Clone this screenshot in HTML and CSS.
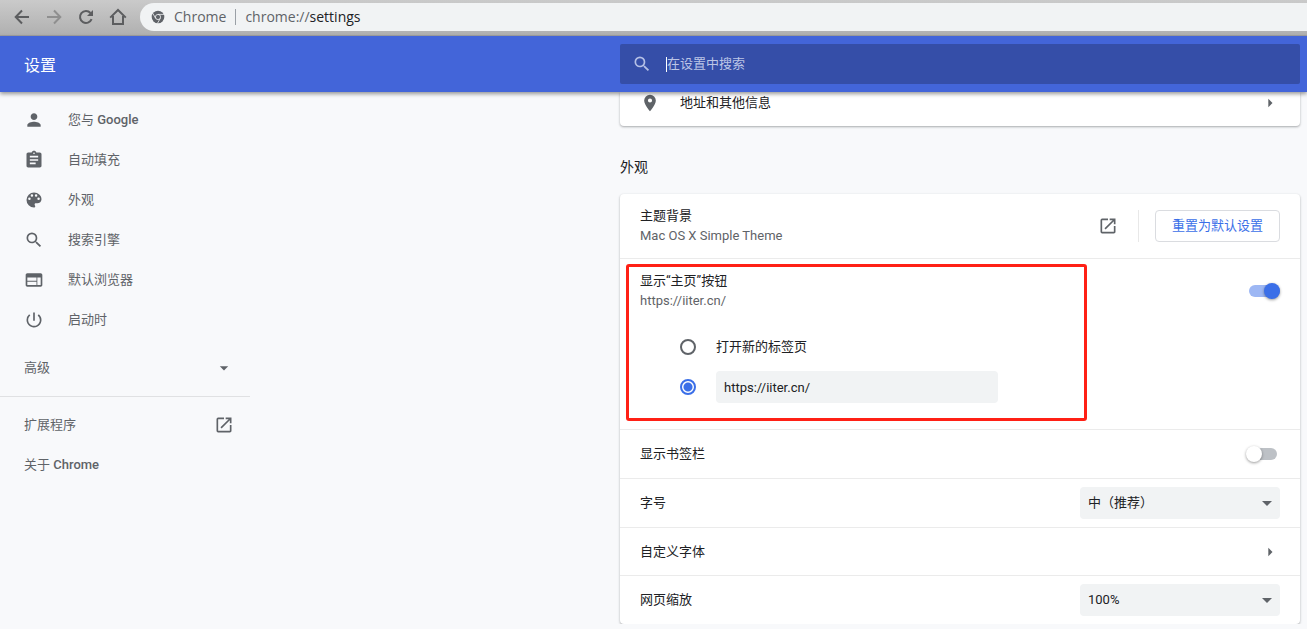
FILE: index.html
```html
<!DOCTYPE html>
<html lang="zh-CN">
<head>
<meta charset="utf-8">
<title>设置</title>
<link rel="stylesheet" href="styles.css">
</head>
<body>
<div class="toolbar">
  <div class="nav-buttons">
    <button class="nav-button" aria-label="后退"><svg viewBox="0 0 20 20"><path d="M17 10H4M10 3.5 3.7 10l6.3 6.5"/></svg></button>
    <button class="nav-button nav-button-off" aria-label="前进"><svg viewBox="0 0 20 20"><path d="M3 10h13M10 3.5l6.3 6.5-6.3 6.5"/></svg></button>
    <button class="nav-button" aria-label="重新加载"><svg viewBox="0 0 20 20"><path d="M15.6 12.2A6 6 0 1 1 14.5 6"/><path class="solid" d="M17 3v6h-6z"/></svg></button>
    <button class="nav-button" aria-label="主页"><svg viewBox="0 0 20 20"><path d="M2.2 10.6 10 3l7.800 7.600M5 9v8h10V9"/></svg></button>
  </div>
  <div class="address">
    <svg class="chrome-icon" viewBox="0 0 14 14"><circle cx="7" cy="7" r="6.300" fill="#5f6368"/><g fill="none" stroke="#f1f3f4" stroke-width=".8"><circle cx="7" cy="7" r="2.600"/><path d="M7 4.400h6M4.700 8.400 1.700 3.200M9.300 8.400l-3 5.200"/></g></svg>
    <span class="site">Chrome</span>
    <span class="url">chrome://<span class="url-host">settings</span></span>
  </div>
</div>

<header class="header">
  <h1 class="title">设置</h1>
  <label class="search">
    <svg class="icon" viewBox="0 0 24 24"><path d="M15.500 14h-.79l-.28-.27A6.470 6.470 0 0 0 16 9.500 6.500 6.500 0 1 0 9.500 16c1.610 0 3.090-.59 4.230-1.570l.27.28v.79l5 4.990L20.490 19l-4.990-5zm-6 0C7.010 14 5 11.990 5 9.500S7.010 5 9.500 5 14 7.010 14 9.500 11.990 14 9.500 14z"/></svg>
    <span class="caret"></span>
    <input class="search-input" type="text" placeholder="在设置中搜索" aria-label="在设置中搜索">
  </label>
</header>

<div class="page">
  <nav class="sidebar">
    <a class="menu-item" href="#people"><svg class="icon" viewBox="0 0 24 24"><path d="M12 12c2.210 0 4-1.790 4-4s-1.790-4-4-4-4 1.790-4 4 1.790 4 4 4zm0 2c-2.670 0-8 1.340-8 4v2h16v-2c0-2.660-5.330-4-8-4z"/></svg><span>您与 <span class="latin">Google</span></span></a>
    <a class="menu-item" href="#autofill"><svg class="icon" viewBox="0 0 24 24"><path d="M19 3h-4.180C14.400 1.840 13.300 1 12 1s-2.400.84-2.820 2H5c-1.100 0-2 .9-2 2v14c0 1.100.9 2 2 2h14c1.100 0 2-.9 2-2V5c0-1.100-.9-2-2-2zm-7 0c.55 0 1 .45 1 1s-.45 1-1 1-1-.45-1-1 .45-1 1-1zm2 14H7v-2h7v2zm3-4H7v-2h10v2zm0-4H7V7h10v2z"/></svg>自动填充</a>
    <a class="menu-item" href="#appearance"><svg class="icon" viewBox="0 0 24 24"><path d="M12 3a9 9 0 0 0 0 18c.83 0 1.500-.67 1.500-1.500 0-.39-.15-.74-.39-1.010-.23-.26-.38-.61-.38-.99 0-.83.67-1.500 1.500-1.500H16c2.760 0 5-2.240 5-5 0-4.420-4.030-8-9-8zm-5.500 9a1.500 1.500 0 1 1 0-3 1.500 1.500 0 0 1 0 3zm3-4a1.500 1.500 0 1 1 0-3 1.500 1.500 0 0 1 0 3zm5 0a1.500 1.500 0 1 1 0-3 1.500 1.500 0 0 1 0 3zm3 4a1.500 1.500 0 1 1 0-3 1.500 1.500 0 0 1 0 3z"/></svg>外观</a>
    <a class="menu-item" href="#search"><svg class="icon" viewBox="0 0 24 24"><path d="M15.500 14h-.79l-.28-.27A6.470 6.470 0 0 0 16 9.500 6.500 6.500 0 1 0 9.500 16c1.610 0 3.090-.59 4.230-1.570l.27.28v.79l5 4.990L20.490 19l-4.990-5zm-6 0C7.010 14 5 11.990 5 9.500S7.010 5 9.500 5 14 7.010 14 9.500 11.990 14 9.500 14z"/></svg>搜索引擎</a>
    <a class="menu-item" href="#default"><svg class="icon" viewBox="0 0 24 24"><path d="M20 4H4c-1.100 0-1.990.9-1.990 2L2 18c0 1.100.9 2 2 2h16c1.100 0 2-.9 2-2V6c0-1.100-.9-2-2-2zm-5 14H4v-4h11v4zm0-5H4V9h11v4zm5 5h-4V9h4v9z"/></svg>默认浏览器</a>
    <a class="menu-item" href="#startup"><svg class="icon" viewBox="0 0 24 24"><path d="M13 3h-2v10h2V3zm4.830 2.170-1.420 1.420A6.920 6.920 0 0 1 19 12a7 7 0 1 1-11.420-5.420L6.170 5.170A8.930 8.930 0 0 0 3 12a9 9 0 1 0 14.830-6.830z"/></svg>启动时</a>
    <button class="menu-item menu-advanced" type="button">高级<svg class="icon" viewBox="0 0 24 24"><path d="m7 10 5 5 5-5z"/></svg></button>
    <div class="menu-extra">
      <a class="menu-item menu-spread" href="#extensions">扩展程序<svg class="icon" viewBox="0 0 24 24"><path d="M19 19H5V5h7V3H5a2 2 0 0 0-2 2v14a2 2 0 0 0 2 2h14c1.100 0 2-.9 2-2v-7h-2v7zM14 3v2h3.590l-9.830 9.830 1.410 1.410L19 6.410V10h2V3h-7z"/></svg></a>
      <a class="menu-item menu-spread" href="#about"><span>关于 <span class="latin">Chrome</span></span></a>
    </div>
  </nav>

  <main class="main">
    <section class="card card-scrolled">
      <a class="address-row" href="#addresses">
        <svg class="icon" viewBox="0 0 24 24"><path d="M12 2a7 7 0 0 0-7 7c0 5.250 7 13 7 13s7-7.750 7-13a7 7 0 0 0-7-7zm0 9.500a2.500 2.500 0 1 1 0-5 2.500 2.500 0 0 1 0 5z"/></svg>
        <span class="grow">地址和其他信息</span>
        <svg class="icon" viewBox="0 0 24 24"><path d="m10 17 5-5-5-5z"/></svg>
      </a>
    </section>

    <h2 class="section-title">外观</h2>
    <section class="card">
      <div class="row row-tall">
        <div class="grow">
          <div>主题背景</div>
          <div class="secondary">Mac OS X Simple Theme</div>
        </div>
        <a class="theme-link" href="#theme" aria-label="打开主题背景"><svg class="icon" viewBox="0 0 24 24"><path d="M19 19H5V5h7V3H5a2 2 0 0 0-2 2v14a2 2 0 0 0 2 2h14c1.100 0 2-.9 2-2v-7h-2v7zM14 3v2h3.590l-9.830 9.830 1.410 1.410L19 6.410V10h2V3h-7z"/></svg></a>
        <div class="divider"></div>
        <button class="reset" type="button">重置为默认设置</button>
      </div>

      <div class="home">
        <div class="row home-row">
          <label class="grow" for="home-toggle">
            <span class="line">显示“主页”按钮</span>
            <span class="line secondary">https://iiter.cn/</span>
          </label>
          <input class="toggle" id="home-toggle" type="checkbox" checked>
        </div>
        <div class="options">
          <label class="option"><input class="radio" type="radio" name="home">打开新的标签页</label>
          <div class="option">
            <input class="radio" type="radio" name="home" aria-label="自定义网址" checked>
            <input class="url-input" type="text" value="https://iiter.cn/" aria-label="主页网址">
          </div>
        </div>
        <div class="highlight"></div>
      </div>

      <div class="row">
        <label class="grow" for="bookmarks">显示书签栏</label>
        <input class="toggle" id="bookmarks" type="checkbox">
      </div>
      <div class="row">
        <label class="grow" for="font-size">字号</label>
        <div class="select-box">
          <select class="select" id="font-size"><option>中（推荐）</option></select>
          <svg class="select-arrow" viewBox="0 0 10 5"><path d="M0 0h10L5 5z"/></svg>
        </div>
      </div>
      <a class="row row-short" href="#fonts">
        <span class="grow">自定义字体</span>
        <svg class="icon" viewBox="0 0 24 24"><path d="m10 17 5-5-5-5z"/></svg>
      </a>
      <div class="row row-short row-plain">
        <label class="grow" for="zoom">网页缩放</label>
        <div class="select-box">
          <select class="select" id="zoom"><option>100%</option></select>
          <svg class="select-arrow" viewBox="0 0 10 5"><path d="M0 0h10L5 5z"/></svg>
        </div>
      </div>
    </section>
  </main>
</div>
</body>
</html>
```

FILE: styles.css
```css
* {
  box-sizing: border-box;
}

body {
  margin: 0;
  background: #f8f9fb;
  color: #202124;
  font: 13px/20px Roboto, "Noto Sans CJK SC", sans-serif;
}

a {
  color: inherit;
  text-decoration: none;
}

button,
input,
select {
  margin: 0;
  border: 0;
  font: inherit;
  color: inherit;
}

svg {
  display: block;
}

.icon {
  flex: none;
  width: 20px;
  height: 20px;
  fill: #5f6368;
}

.grow {
  flex: 1;
}

/* Browser toolbar */
.toolbar {
  display: flex;
  align-items: center;
  gap: 12px;
  height: 36px;
  padding: 0 0 2px 12px;
  background: linear-gradient(#cacaca, #b0b0b0);
  border-bottom: 1px solid #a0a0a0;
}

.nav-buttons {
  display: flex;
  gap: 12px;
}

.nav-button {
  padding: 0;
  background: none;
}

.nav-button svg {
  width: 20px;
  height: 20px;
  fill: none;
  stroke: #5c5d5f;
  stroke-width: 2;
}

.nav-button .solid {
  fill: #5c5d5f;
  stroke: none;
}

.nav-button-off svg {
  stroke: #8f8f8f;
}

.address {
  display: flex;
  flex: 1;
  align-items: center;
  height: 28px;
  padding-left: 11px;
  background: #f1f3f4;
  border-radius: 14px 0 0 14px;
  color: #5f6368;
  font: 14px/16px "Open Sans", sans-serif;
}

.chrome-icon {
  width: 14px;
  height: 14px;
  margin-right: 9px;
}

.site {
  padding-right: 9px;
  margin-right: 9px;
  border-right: 1px solid #9aa0a6;
}

.url-host {
  color: #202124;
}

/* Settings header */
.header {
  position: relative;
  z-index: 1;
  display: flex;
  align-items: center;
  justify-content: space-between;
  height: 56px;
  padding: 0 7px 0 24px;
  background: #4365d9;
  box-shadow: 0 2px 4px rgba(0, 0, 0, 0.4);
}

.title {
  margin: 0;
  padding-top: 4px;
  color: #fff;
  font-size: 16px;
  font-weight: 400;
}

.search {
  display: flex;
  align-items: center;
  flex: 0 1 680px;
  height: 40px;
  padding: 0 12px;
  background: #354ea8;
  border-radius: 2px;
}

.search .icon {
  margin-right: 14px;
  fill: #b5c0e6;
}

.caret {
  width: 1px;
  height: 15px;
  background: #fff;
}

.search-input {
  flex: 1;
  padding: 0;
  background: none;
  outline: 0;
}

.search-input::placeholder {
  color: #bcc5e6;
  opacity: 1;
}

/* Page columns */
.page {
  display: flex;
  justify-content: space-between;
  padding-right: 7px;
}

.sidebar {
  flex: none;
  width: 250px;
  padding-top: 8px;
  color: #5f6368;
}

.latin {
  font-weight: 500;
}

.menu-item {
  display: flex;
  align-items: center;
  gap: 24px;
  height: 40px;
  padding: 0 16px 0 24px;
}

.menu-advanced,
.menu-spread {
  justify-content: space-between;
}

.menu-advanced {
  width: 100%;
  margin-top: 8px;
  background: none;
}

.menu-extra {
  margin-top: 8px;
  padding-top: 8px;
  border-top: 1px solid #e0e1e3;
}

.main {
  flex: 0 1 680px;
}

.card {
  background: #fff;
  border-radius: 4px;
  box-shadow: 0 1px 2px rgba(60, 64, 67, 0.3), 0 1px 3px rgba(60, 64, 67, 0.15);
}

.card-scrolled {
  border-radius: 0 0 4px 4px;
}

.address-row {
  display: flex;
  align-items: center;
  gap: 20px;
  height: 34px;
  padding: 0 20px 13px;
}

.section-title {
  margin: 0;
  padding: 31px 0 17px;
  font-size: 14px;
  font-weight: 400;
}

.row {
  display: flex;
  align-items: center;
  height: 49px;
  padding: 0 20px;
  border-bottom: 1px solid #ebebeb;
}

.row-short {
  height: 48px;
}

.row-tall {
  height: 65px;
}

.row-plain,
.home-row {
  border-bottom: 0;
}

.home-row {
  height: 63px;
}

.line {
  display: block;
}

.secondary {
  color: #5f6368;
}

.divider {
  width: 1px;
  height: 32px;
  margin: 0 16px 0 20px;
  background: #e8e8e8;
}

.reset {
  height: 32px;
  padding: 0 16px;
  background: #fff;
  border: 1px solid #dadce0;
  border-radius: 4px;
  color: #3b6fe8;
}

/* Home button settings */
.home {
  position: relative;
  padding-bottom: 22px;
  border-bottom: 1px solid #ebebeb;
}

.options {
  padding: 5px 20px 0 60px;
}

.option {
  display: flex;
  align-items: center;
  gap: 20px;
  height: 40px;
}

.radio {
  appearance: none;
  width: 16px;
  height: 16px;
  border: 2px solid #5f6368;
  border-radius: 50%;
}

.radio:checked {
  border-color: #3b6fe8;
  background: radial-gradient(circle, #3b6fe8 4px, #fff 5px);
}

.url-input {
  width: 282px;
  height: 32px;
  padding: 0 8px;
  background: #f1f3f4;
  border-radius: 4px;
}

.highlight {
  position: absolute;
  inset: 5px 213px 8px 6px;
  border: 3px solid #ff2015;
  border-radius: 3px;
  pointer-events: none;
}

/* Toggle switch */
.toggle {
  appearance: none;
  display: flex;
  align-items: center;
  width: 28px;
  height: 12px;
  margin-right: 3px;
  background: #bdc1c6;
  border-radius: 6px;
}

.toggle::before {
  content: "";
  width: 16px;
  height: 16px;
  margin-left: -3px;
  background: #fff;
  border-radius: 50%;
  box-shadow: 0 1px 3px rgba(0, 0, 0, 0.4);
}

.toggle:checked {
  margin-right: 0;
  width: 31px;
  justify-content: flex-end;
  background: #9db7f4;
}

.toggle:checked::before {
  background: #3b6fe8;
}

/* Drop-downs */
.select-box {
  position: relative;
  width: 200px;
}

.select {
  appearance: none;
  display: block;
  width: 100%;
  height: 32px;
  padding: 0 24px 0 8px;
  background: #f1f3f4;
  border-radius: 4px;
}

.select-arrow {
  position: absolute;
  top: 14px;
  right: 8px;
  width: 10px;
  height: 5px;
  fill: #5f6368;
  pointer-events: none;
}
```
